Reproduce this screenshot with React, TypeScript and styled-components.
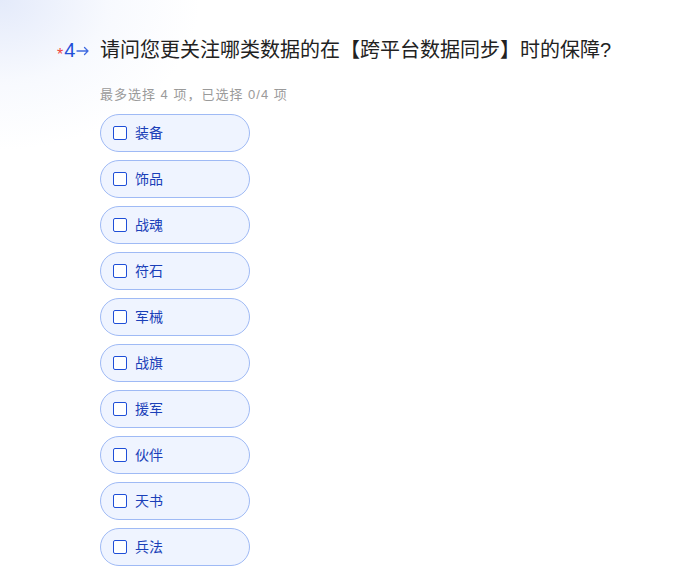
import React from "react";
import styled, { createGlobalStyle } from "styled-components";

const Global = createGlobalStyle`
  html, body { margin: 0; padding: 0; background: #ffffff; }
  body { font-family: "Liberation Sans", "Noto Sans CJK SC", sans-serif; }
`;

const Page = styled.div`
  width: 699px;
  height: 588px;
  overflow: hidden;
  box-sizing: border-box;
  padding: 36px 0 0 57px;
  background:
    radial-gradient(ellipse 200px 150px at 0px 0px, rgba(225, 232, 250, 0.9), rgba(240, 244, 253, 0.5) 55%, rgba(255, 255, 255, 0) 100%),
    #ffffff;
`;

const Header = styled.div`
  display: flex;
  align-items: center;
  height: 28px;
`;

const Num = styled.div`
  width: 43px;
  display: flex;
  align-items: center;
  font-family: "Liberation Sans", Arial, sans-serif;
`;

const Star = styled.span`
  color: #f0443c;
  font-size: 16px;
  line-height: 16px;
  height: 16px;
  transform: translateY(5px);
  margin-right: 1px;
`;

const Digit = styled.span`
  color: #1f4fd8;
  font-size: 20px;
  line-height: 28px;
`;

const Title = styled.div`
  font-size: 20px;
  line-height: 28px;
  color: #222222;
`;

const Body = styled.div`
  padding-left: 43px;
`;

const Hint = styled.div`
  margin-top: 21px;
  font-size: 13px;
  line-height: 20px;
  letter-spacing: 1px;
  color: #9a9a9a;
`;

const Options = styled.div`
  margin-top: 9px;
  display: flex;
  flex-direction: column;
  gap: 8px;
`;

const Pill = styled.label`
  box-sizing: border-box;
  width: 150px;
  height: 38px;
  border: 1px solid #9fbaf5;
  background: #eff4ff;
  border-radius: 19px;
  display: flex;
  align-items: center;
  padding-left: 12px;
  gap: 8px;
  cursor: pointer;
`;

const Box = styled.span`
  box-sizing: border-box;
  width: 14px;
  height: 14px;
  border: 1.5px solid #1f4fd8;
  border-radius: 2px;
  background: #fff;
`;

const Label = styled.span`
  font-size: 14px;
  line-height: 18px;
  color: #1a3fb8;
  margin-top: -1px;
`;

const options = ["装备", "饰品", "战魂", "符石", "军械", "战旗", "援军", "伙伴", "天书", "兵法"];

export default function App() {
  return (
    <Page>
      <Global />
      <Header>
        <Num>
          <Star>*</Star>
          <Digit>4</Digit>
          <svg width="14" height="10" viewBox="0 0 14 10" style={{ marginLeft: 1, marginTop: 1 }}>
            <path d="M1 5 H12 M8.5 1.5 L12 5 L8.5 8.5" stroke="#3f6ae0" strokeWidth="1.3" fill="none" strokeLinecap="round" strokeLinejoin="round" />
          </svg>
        </Num>
        <Title>请问您更关注哪类数据的在【跨平台数据同步】时的保障?</Title>
      </Header>
      <Body>
        <Hint>最多选择 4 项，已选择 0/4 项</Hint>
        <Options>
          {options.map((o) => (
            <Pill key={o}>
              <Box />
              <Label>{o}</Label>
            </Pill>
          ))}
        </Options>
      </Body>
    </Page>
  );
}
